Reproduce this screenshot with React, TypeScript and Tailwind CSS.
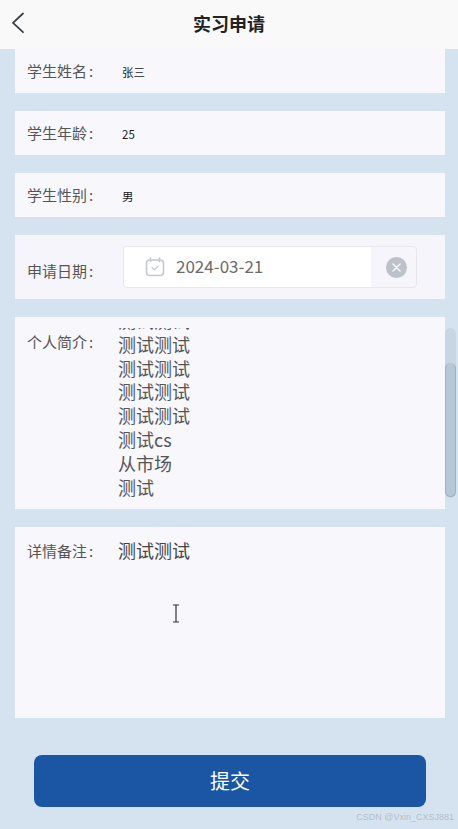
const font = "font-['Noto_Sans_CJK_SC','Noto_Sans',sans-serif]";

function Label({ text, className }: { text: string; className: string }) {
  return (
    <div className={`text-[15px] text-[#555555] leading-none ${className}`}>
      {text}
      <span className="ml-[2px]">:</span>
    </div>
  );
}

function InfoRow({ label, value }: { label: string; value: string }) {
  return (
    <div className="h-[44px] bg-[#f7f7fc] flex items-center pl-3 shrink-0">
      <Label text={label} className="w-[95px] -mt-[1px]" />
      <div className="text-[11.5px] text-[#222222] leading-none mt-[3px]">{value}</div>
    </div>
  );
}

function CalendarIcon() {
  return (
    <svg width="20" height="20" viewBox="0 0 20 20" fill="none" stroke="#c4c8d0" strokeWidth="1.6" strokeLinecap="round" strokeLinejoin="round">
      <rect x="1.5" y="3" width="17" height="15.5" rx="3" />
      <path d="M5.5 1v3.5M14.5 1v3.5" />
      <path d="M7 10.5l2.4 2.2 3.8-3.6" strokeWidth="1.2" />
    </svg>
  );
}

export default function App() {
  const introLines = ["测试测试", "测试测试", "测试测试", "测试测试", "测试测试", "测试cs", "从市场", "测试"];

  return (
    <div className={`${font} relative w-[458px] h-[829px] overflow-hidden bg-[#d5e3f0] flex flex-col`}>
      <div className="relative h-[49px] shrink-0 bg-[#f9f9fa] flex items-center justify-center">
        <svg className="absolute left-[11px] top-[12px]" width="14" height="22" viewBox="0 0 14 22" fill="none" stroke="#3a3f45" strokeWidth="1.8" strokeLinecap="round" strokeLinejoin="round">
          <path d="M12 1.5L2 10.8l10 9.4" />
        </svg>
        <div className="text-[18px] font-bold text-[#222222] leading-none -mt-[3px]">实习申请</div>
      </div>

      <div className="flex flex-col gap-[18px] mx-[15px] w-[430px]">
        <InfoRow label="学生姓名" value="张三" />
        <InfoRow label="学生年龄" value="25" />
        <InfoRow label="学生性别" value="男" />

        <div className="h-[64px] bg-[#f5f5fb] flex items-center pl-3 shrink-0">
          <Label text="申请日期" className="w-[96px] mt-[6px]" />
          <div className="w-[294px] h-[42px] rounded-[4px] border border-[#e8e8ee] flex items-stretch overflow-hidden">
            <div className="w-[247px] bg-white flex items-center pl-[21px] gap-[11px]">
              <CalendarIcon />
              <span className="text-[17px] text-[#6b6b6b] leading-none -mt-[3px]">2024-03-21</span>
            </div>
            <div className="flex-1 flex items-center justify-center pl-[6px]">
              <div className="w-[21px] h-[21px] rounded-full bg-[#bcc1ca] flex items-center justify-center">
                <svg width="9" height="9" viewBox="0 0 9 9" stroke="#f5f5fb" strokeWidth="1.6" strokeLinecap="round">
                  <path d="M1 1l7 7M8 1l-7 7" />
                </svg>
              </div>
            </div>
          </div>
        </div>

        <div className="h-[192px] bg-[#f7f7fc] flex pl-3 pt-[11px] shrink-0">
          <Label text="个人简介" className="w-[91px] mt-[6px]" />
          <div className="h-[175px] overflow-hidden">
            <div className="-mt-[19px] text-[18px] leading-[23.8px] text-[#555555]">
              {introLines.map((line, i) => (
                <div key={i}>{line}</div>
              ))}
            </div>
          </div>
        </div>

        <div className="h-[191px] bg-[#f7f7fc] flex pl-3 pt-[12px] shrink-0">
          <Label text="详情备注" className="w-[91px] mt-[4px]" />
          <div className="text-[18px] leading-[23.8px] text-[#444444]">测试测试</div>
        </div>
      </div>

      <div className="mt-[37px] ml-[34px] w-[392px] h-[52px] rounded-[8px] bg-[#1a56a4] flex items-center justify-center text-white text-[20px] leading-none">
        提交
      </div>

      {/* scrollbar of the form, on top of the page */}
      <div className="absolute left-[445px] top-[328px] w-[11px] h-[170px] rounded-full bg-[#c8d6e4]">
        <div className="absolute left-0 top-[35px] w-[11px] h-[134px] rounded-full bg-[#b7c7d6] border-x border-b border-[#9fb0bf]" />
      </div>

      {/* text cursor */}
      <svg className="absolute left-[171px] top-[604px]" width="10" height="20" viewBox="0 0 10 20" fill="none" stroke="#333333" strokeWidth="1.2">
        <path d="M2 1h6M5 1v17M2 18h6" />
      </svg>

      <div className="absolute right-[4px] top-[810px] text-[9px] leading-[14px] text-[#b4bec8] font-['Liberation_Sans',sans-serif]">
        CSDN @Vxin_CXSJ881
      </div>
    </div>
  );
}
